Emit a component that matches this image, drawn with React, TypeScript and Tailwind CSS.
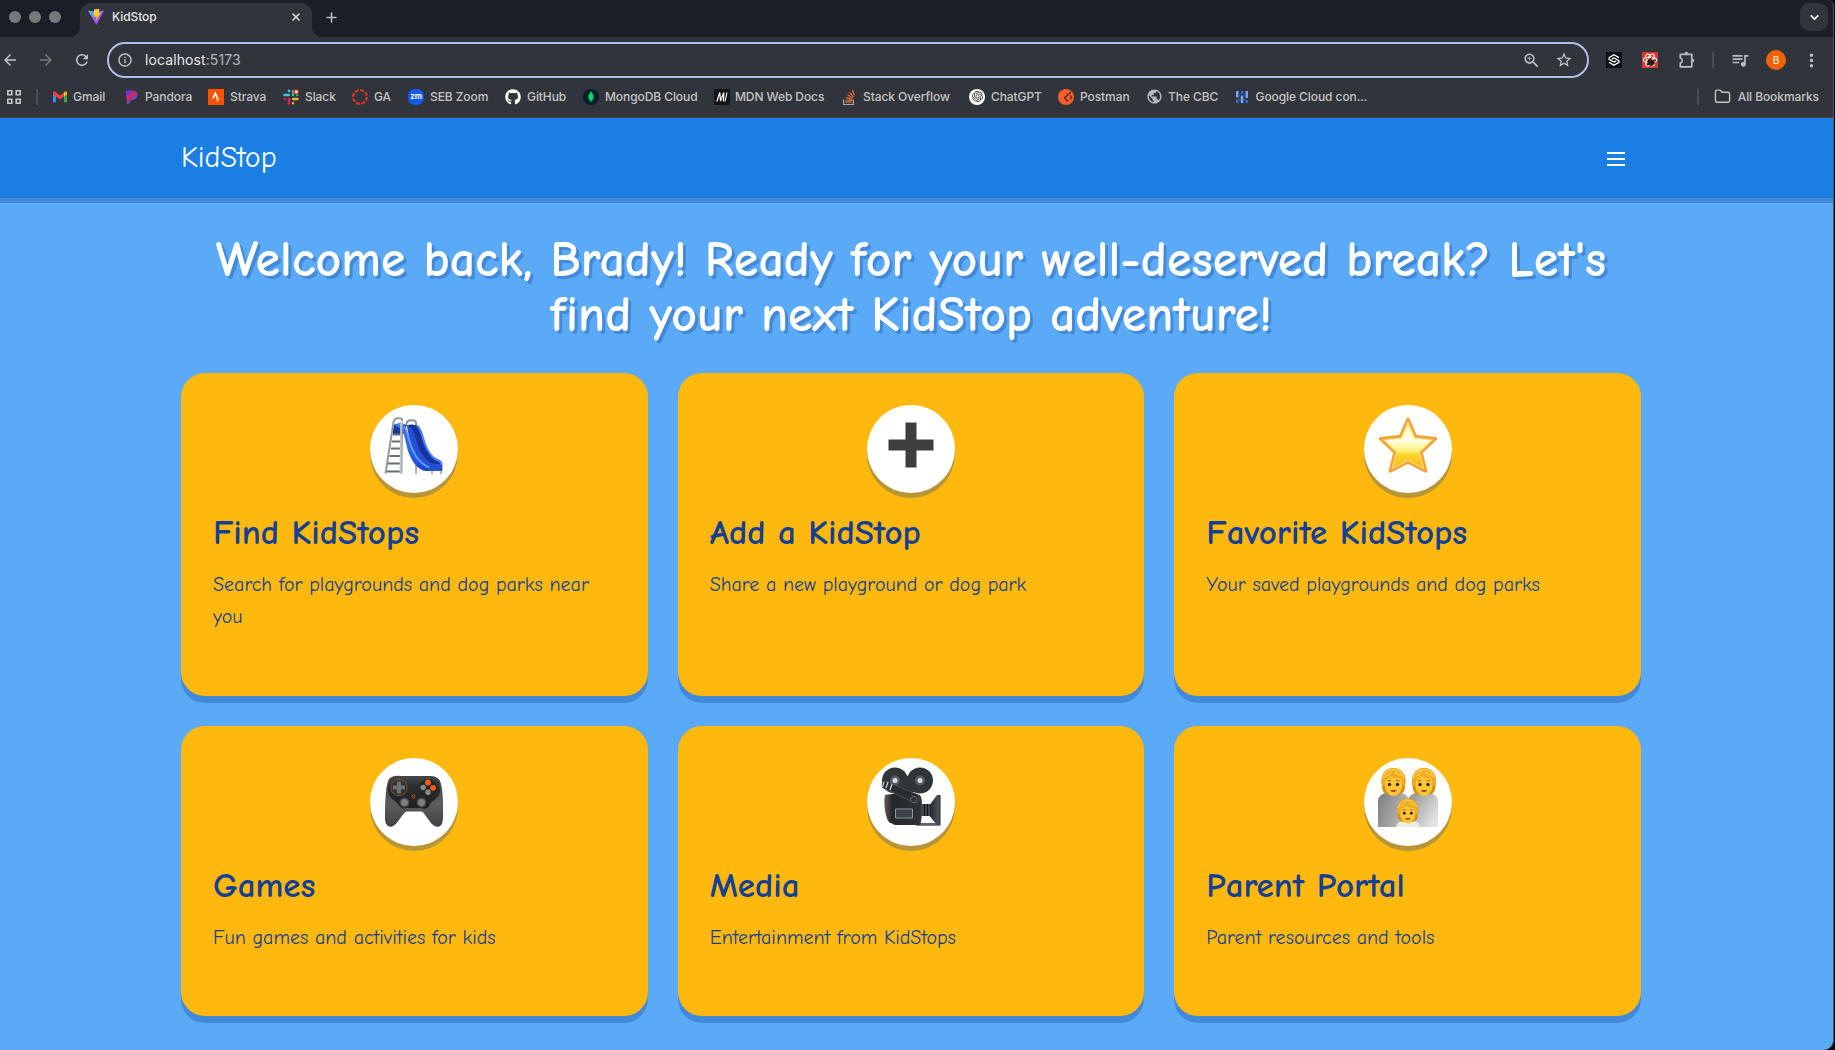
import type { ReactNode } from 'react';
import { ChevronDown, Folder, Plus, X } from 'lucide-react';
import { FaGithub } from 'react-icons/fa';
import {
  MdArrowBack,
  MdArrowForward,
  MdInfoOutline,
  MdMoreVert,
  MdPublic,
  MdQueueMusic,
  MdRefresh,
  MdStarBorder,
  MdZoomIn,
} from 'react-icons/md';
import { SiOpenai } from 'react-icons/si';

/* ---------- Browser chrome icons ---------- */

const ViteLogo = () => (
  <svg width="16" height="16" viewBox="0 0 16 16">
    <defs>
      <linearGradient id="vite" x1="0" y1="0" x2="0.6" y2="1">
        <stop offset="0" stopColor="#41d1ff" />
        <stop offset="0.5" stopColor="#8a6bff" />
        <stop offset="1" stopColor="#bd34fe" />
      </linearGradient>
      <linearGradient id="bolt" x1="0" y1="0" x2="0" y2="1">
        <stop offset="0" stopColor="#ffdd35" />
        <stop offset="1" stopColor="#ffa800" />
      </linearGradient>
    </defs>
    <path d="M0 1.5 8 3l8-1.500L8.300 16z" fill="url(#vite)" />
    <path d="M6 .6 11.500 0l-1 3.800 2.200-.3-4.700 9 .6-5-3 .5z" fill="url(#bolt)" />
  </svg>
);

const AppsIcon = () => (
  <svg width="14" height="14" viewBox="0 0 14 14" fill="none" stroke="#c6c7ca" strokeWidth="1.600">
    <path d="M.8.8h4v4h-4zM9.200.8h4v4h-4zM.8 9.200h4v4h-4zM9.200 9.200h4v4h-4z" />
  </svg>
);

const PuzzleIcon = () => (
  <svg width="18" height="18" viewBox="0 0 18 18" fill="none" stroke="#b9bcc6" strokeWidth="1.700" strokeLinejoin="round">
    <path d="M2.300 3.300h11.500v12.500H2.300v-3.600c2.600-.6 2.600-4.600 0-5.200z" />
    <path d="M6.300 2.800a2 2 0 0 1 4 0zM14.300 7.500a2 2 0 0 1 0 4z" fill="#b9bcc6" stroke="none" />
  </svg>
);

const Gmail = () => (
  <svg width="16" height="16" viewBox="0 0 16 16">
    <path d="M1 4v9.300h3V6z" fill="#4285f4" />
    <path d="M12 6v7.300h3V4z" fill="#34a853" />
    <path d="M1 3.500C1 2.400 2.300 2 3.200 2.700L8 6.400l4.800-3.700L12 7.600 8 10.500 1 5.300z" fill="#ea4335" />
    <path d="M12 3.300c1.500-1.300 3-.6 3 .5v1.500l-3 2.300z" fill="#fbbc04" />
  </svg>
);

const Pandora = () => (
  <svg width="16" height="16" viewBox="0 0 16 16">
    <defs>
      <linearGradient id="pan" x1="0" y1="0" x2="0.8" y2="1">
        <stop offset="0" stopColor="#3a4fe0" />
        <stop offset="0.28" stopColor="#7a35c8" />
        <stop offset="0.45" stopColor="#e0284f" />
        <stop offset="0.6" stopColor="#b02f8a" />
        <stop offset="0.75" stopColor="#2a6df0" />
      </linearGradient>
    </defs>
    <path d="M1.500 2.500C4 .7 6 1.500 8 1.500c4 0 5.500 1.700 5.500 4.300 0 3-2.300 4.700-5 5.200L6.500 11.500c0 2-1 3.500-3.500 3.700-.8-2 .5-4-.5-6C1.500 7 2.500 5 1.500 2.500z" fill="url(#pan)" />
  </svg>
);

const Strava = () => (
  <svg width="16" height="16" viewBox="0 0 16 16">
    <path d="M0 0h16v16H0z" fill="#fc5200" />
    <path d="M4 9.300 7.300 2.500l3.300 6.800H8.700L7.300 6.500 5.900 9.300z" fill="#fff" />
    <path d="m7.500 9.300 2.100 4.200 2.200-4.200h-1.300l-.9 1.700-.8-1.700z" fill="#ffc9ad" />
  </svg>
);

const Slack = () => (
  <svg width="16" height="16" viewBox="0 0 16 16" strokeWidth="2.600" strokeLinecap="round">
    <path d="M1.500 6h4.200M6 1.800v.1" stroke="#36c5f0" />
    <path d="M10 2v4M14.200 6h.1" stroke="#2eb67d" />
    <path d="M10.200 10h4.200M10 14.200v.1" stroke="#ecb22e" />
    <path d="M6 10v4.200M1.700 10h.1" stroke="#e01e5a" />
    <circle cx="13.300" cy="2.700" r="2.700" fill="#e8201f" />
    <circle cx="13.300" cy="2.700" r="1.500" fill="#fff" />
  </svg>
);

const GaRing = () => (
  <svg width="16" height="16" viewBox="0 0 16 16" fill="none">
    <circle cx="8" cy="8" r="6.900" stroke="#e3342a" strokeWidth="2.200" strokeDasharray="3.900 1.520" />
  </svg>
);

const Zoom = () => (
  <span className="flex h-4 w-4 items-center justify-center rounded-[7px] bg-[#1359f2] font-['Inter'] text-[8px] font-bold leading-none tracking-[-0.3px] text-white">
    <span className="-mt-px">zm</span>
  </span>
);

const Mongo = () => (
  <svg width="16" height="16" viewBox="0 0 16 16">
    <circle cx="8" cy="8" r="8" fill="#001e2b" />
    <path d="M8 2.500c3.300 3.600 3.500 7 .3 9.700L8.200 13.500h-.4l-.1-1.300C4.500 9.500 4.700 6.100 8 2.500z" fill="#00d95f" />
  </svg>
);

const Mdn = () => (
  <svg width="16" height="16" viewBox="0 0 16 16" fill="none" stroke="#fff">
    <path d="M0 0h16v16H0z" fill="#15141a" stroke="none" />
    <path d="m2.800 12.500 3-9 .7 8.500 3.300-8.500-.3 9" strokeWidth="1.200" />
    <path d="m11 12.500 2-9" strokeWidth="1.100" />
  </svg>
);

const StackOverflow = () => (
  <svg width="16" height="16" viewBox="0 0 16 16" fill="none">
    <path d="M1.600 10.500v5h9.800v-5" stroke="#a9abae" strokeWidth="1.100" />
    <path d="M3.300 13.200h6.400M3.400 11l6.400.6M4 8.500l6.100 1.800M5.500 5.800l5.200 3.400M7.600 3.300l4 4.900M10.300 1.300l2.200 5" stroke="#e8702c" strokeWidth="1.200" />
  </svg>
);

const ChatGpt = () => (
  <span className="flex h-4 w-4 items-center justify-center rounded-full bg-white">
    <SiOpenai size={11} color="#2c2c2e" />
  </span>
);

const Postman = () => (
  <svg width="16" height="16" viewBox="0 0 16 16" fill="none">
    <circle cx="8" cy="8" r="8" fill="#ff5d2b" />
    <path d="M13 3 6.500 8.800l3.700 3.700M12.300 6.500c1.600 1 1 3-.2 3.600" stroke="#3a2a2b" strokeWidth="1.200" />
  </svg>
);

const GoogleCloud = () => (
  <svg width="16" height="16" viewBox="0 0 16 16">
    <path d="M2 2h2.500v6.500H2zM11.500 2H14v7h-2.500zM6.800 6.500h2.500V14H6.800z" fill="#7ba4f6" />
    <path d="M2 10.500h2.500V14H2zM11.500 11H14v3h-2.500zM6.800 2h2.500v3H6.800z" fill="#3367e0" />
    <path d="M4.500 4H6v3H4.500zM9.500 4h1.700v3H9.500zM4.800 9.500H6V13H4.800zM9.800 9.500H11V12H9.800z" fill="#2d4fa8" />
  </svg>
);

const KnotExtension = () => (
  <svg width="16" height="16" viewBox="0 0 16 16" fill="none" stroke="#fff" strokeWidth="1.300">
    <path d="M0 0h16v16H0z" fill="#0b1118" stroke="none" />
    <path d="M12.900 5.600 8 2.700 3.100 5.600v1.800L8 10l2.300-1.200" />
    <path d="M3.100 10.400 8 13.300l4.900-2.900V8.600L8 6 5.700 7.200" />
  </svg>
);

const ReactExtension = () => (
  <svg width="16" height="16" viewBox="0 0 16 16" fill="none">
    <path d="M0 0h16v16H0z" fill="#d8392f" />
    <g stroke="#fff" strokeWidth="1.100">
      <ellipse cx="8" cy="8" rx="6.600" ry="2.700" />
      <ellipse cx="8" cy="8" rx="6.600" ry="2.700" transform="rotate(60 8 8)" />
      <ellipse cx="8" cy="8" rx="6.600" ry="2.700" transform="rotate(120 8 8)" />
    </g>
    <path d="m5 9 3-2 4 1 1 3-3 3-4-1z" fill="#241b1b" />
    <path d="m6 7-1.500-1M9 6.500 10 5m3 4 1-1M6 12l-1 1.500" stroke="#241b1b" />
  </svg>
);

/* ---------- Card pictograms ---------- */

const Slide = () => (
  <svg viewBox="0 0 88 88" className="h-full w-full" fill="none">
    <defs>
      <linearGradient id="chute" x1="0" y1="0" x2="1" y2="1">
        <stop offset="0" stopColor="#3b74e8" />
        <stop offset="0.5" stopColor="#2c64e4" />
        <stop offset="1" stopColor="#1b3fc4" />
      </linearGradient>
    </defs>
    <path d="M46 60v9M62 64v5M71 64v5" stroke="#8a8d93" strokeWidth="1.300" />
    <path d="M36.500 21v-2.500c.5-3 2-3.300 4.500-3.300 3.500 0 5 .2 5 2.300V22" stroke="#8c9096" strokeWidth="1.900" />
    <path d="m23 20 8.500-2.500 5 3-2 8-11.800 1z" fill="#153a9c" />
    <path d="M37 20.500c4-1.800 9-1 11.500 1.500 3 3 3.500 8.500 6 15 2.500 7 6 13.500 11.500 16.500l4 1.800c2 1.200 2.300 3 2.300 5.200v5.300H60c-5 0-9.500-4.800-12.500-10.500z" fill="#16329f" />
    <path d="M37 20.500c5 1.500 7.500 7.500 9.500 15.500 2.500 9 7 18 15.500 22.500l9.500.8v6.200H60C50 65 45 50 40 39z" fill="#2450d2" />
    <path d="M47 21c4 2 4.800 9 7.500 17 2.500 7 6.500 13.500 11.500 16.500 4 1.500 5.500 2.500 5.500 5.500" stroke="#4a83f2" strokeWidth="2.200" />
    <path d="M24.500 20c5-2.500 8.500-1 10.500 4 3 7 4.500 17.500 9 25 4 8 7.500 12 14.500 14.500v2.500H56c-8-1-12.500-7.500-16-15-4-8.500-4.500-20.500-8-26z" fill="url(#chute)" />
    <path d="M28 19c4-1 6 1.500 7.800 6 3 7 4.700 17 9.200 24.500C48 55 52 59 59 62.500" stroke="#5b95fa" strokeWidth="2" />
    <path d="M16.500 66.500h14M18 58.500h13M19.500 51h11.500M21 43.500h10M22 36.500h9M23 29.500h8" stroke="#696c70" strokeWidth="2" />
    <path d="m15.500 68.500 8-51c.3-3 2-4 4.500-4.200 3-.3 4.500.5 4 2.700" stroke="#94989d" strokeWidth="2" />
    <path d="M31.500 16.500 30.700 68.500" stroke="#c2c5c9" strokeWidth="2.400" />
    <path d="M32.500 20 31.900 68.500" stroke="#76797e" strokeWidth=".7" />
  </svg>
);

const PlusSign = () => (
  <svg viewBox="0 0 88 88" className="h-full w-full">
    <path d="M38.500 17.500h11v17h17v11h-17V62.500h-11v-17h-17v-11h17z" fill="#3e3e3e" />
  </svg>
);

const Star = () => (
  <svg viewBox="0 0 88 88" className="h-full w-full">
    <defs>
      <linearGradient id="star" x1="0" y1="0" x2="0" y2="1">
        <stop offset="0" stopColor="#fff7b0" />
        <stop offset="0.42" stopColor="#ffffe0" />
        <stop offset="0.62" stopColor="#fff27a" />
        <stop offset="0.68" stopColor="#ffd62e" />
        <stop offset="1" stopColor="#fbb414" />
      </linearGradient>
    </defs>
    <path
      d="M44 14.200 51.500 31.500 71.500 33.700 57 47.300 61.700 66 44 57 26.300 66 31 47.300 16.500 33.700 36.500 31.500z"
      fill="url(#star)"
      stroke="#f1a33c"
      strokeWidth="3.400"
      strokeLinejoin="round"
    />
    <path d="M44 17 50.500 33 68 35 55.500 47 59.700 63.500 44 55.500 28.300 63.500 32.500 47 20 35 37.500 33z" fill="none" stroke="#ffe98f" strokeWidth="1.200" opacity=".7" />
  </svg>
);

const Gamepad = () => (
  <svg viewBox="0 0 88 88" className="h-full w-full">
    <defs>
      <linearGradient id="grip" x1="0" y1="0" x2="0" y2="1">
        <stop offset="0" stopColor="#3f4142" />
        <stop offset="0.55" stopColor="#5b5d5e" />
        <stop offset="1" stopColor="#3e4041" />
      </linearGradient>
      <linearGradient id="face" x1="0" y1="0" x2="0" y2="1">
        <stop offset="0" stopColor="#46494a" />
        <stop offset="0.3" stopColor="#2a2c2e" />
        <stop offset="1" stopColor="#1d1f21" />
      </linearGradient>
    </defs>
    <path d="M19 21c3-3 7-3.500 11-3h28c5-.5 9 .5 11.500 4 3 5 4 20 3.500 38-.2 7-3 9.500-7 8.500-6-1.500-11-14-14.500-15h-15c-3.500 1-9 13.500-14.500 15-4.500 1-7-2.500-7-8.500 0-18 .8-34 4-39z" fill="url(#grip)" />
    <path d="M20 23c3-4 7-4.500 11-4h26c5-.5 9 .5 11 4 2 5 3 9.500 1 14-3 5-8 6-9.500 10-2 4.500-6 4-9 3h-13c-4 1-7 0-9-3-2-4-7-5-9.500-10-2-5-1-10 1-14z" fill="url(#face)" />
    <circle cx="29" cy="29.500" r="8.200" fill="#303334" stroke="#8f4a2d" strokeWidth="1" />
    <path d="M27 23.500h4v4h4v4h-4v4h-4v-4h-4v-4h4z" fill="#6d7172" />
    <circle cx="58" cy="29.500" r="8.500" fill="#242627" />
    <circle cx="58" cy="24.500" r="2.900" fill="#ff5a14" />
    <circle cx="63" cy="29.800" r="2.900" fill="#ff5a14" />
    <circle cx="53.200" cy="29.500" r="2.700" fill="#898c8d" />
    <circle cx="58" cy="34.300" r="2.700" fill="#898c8d" />
    <circle cx="43.500" cy="38.500" r="1.600" fill="#44260f" stroke="#d65a20" strokeWidth=".8" />
    <circle cx="34.500" cy="44.500" r="4.200" fill="#7b8082" stroke="#45494b" strokeWidth="1.500" />
    <circle cx="51.500" cy="44.500" r="4.200" fill="#7b8082" stroke="#45494b" strokeWidth="1.500" />
  </svg>
);

const MovieCamera = () => (
  <svg viewBox="0 0 88 88" className="h-full w-full">
    <defs>
      <linearGradient id="cam" x1="0" y1="0" x2="1" y2="0">
        <stop offset="0" stopColor="#6b5a52" />
        <stop offset="0.2" stopColor="#25282b" />
        <stop offset="1" stopColor="#2f3438" />
      </linearGradient>
      <linearGradient id="hood" x1="0" y1="0" x2="1" y2="0">
        <stop offset="0" stopColor="#24282c" />
        <stop offset="0.8" stopColor="#4b5359" />
        <stop offset="1" stopColor="#20242a" />
      </linearGradient>
    </defs>
    <path d="M36 18h14v16H34z" fill="#2d3236" />
    <circle cx="28" cy="22.500" r="13" fill="#303539" />
    <circle cx="53" cy="22.500" r="13" fill="#303539" />
    <circle cx="28" cy="22.500" r="5" fill="#555e64" />
    <circle cx="28" cy="22.500" r="2.500" fill="#d5dde3" />
    <circle cx="53" cy="22.500" r="5" fill="#555e64" />
    <circle cx="53" cy="22.500" r="2.500" fill="#d5dde3" />
    <path d="M49 65h24v2.800H49z" fill="#5a6269" />
    <path d="M18 37c5-1.500 30-2.500 35 0 2 3 2.200 8 2 14s-.5 13-2 16H29c-3 0-3.500-2-6-2-4-3-7-18-5-28z" fill="url(#cam)" />
    <path d="M54 46h12v12H54z" fill="#42494f" />
    <path d="M57.500 46v12M60.500 46v12" stroke="#151719" strokeWidth="1.200" />
    <path d="M63 46.500 70 37h3.500v30H70l-7-8.500z" fill="url(#hood)" />
    <path d="M28.500 51h17v9h-17z" fill="#3b4146" stroke="#8c969c" strokeWidth="1" />
    <path d="m15 25 3.500-2 31 13c5 2.500 3 10-2.500 8.500L15 29.500z" fill="#2a2e32" stroke="#596066" strokeWidth=".7" />
    <path d="m17 24-1.500 5M21 24l-2 6M25 26l-2 6" stroke="#c8cdd1" strokeWidth="1.300" />
    <circle cx="46.500" cy="41.500" r="3" fill="#2a2f33" stroke="#69727a" strokeWidth="1" />
  </svg>
);

const Head = () => (
  <g>
    <path d="M-11.500 4C-14-8-8-14.500 0-14.500S14-8 11.500 4C11.500 8 9.500 11 6 12H-6c-3.500-1-5.500-4-5.500-8z" fill="#d98e12" />
    <path d="M-8.500-3C-8.500-9-4-10 0-10s8.500 1 8.500 7v6C8.500 9 4 13.500 0 13.500S-8.500 9-8.500 3z" fill="#fcc736" />
    <path d="M-11.500 3C-13.500-8-8-14.500 0-14.500S13.500-8 11.500 3L9 3.500C9 0 8.500-3 7-4 2-3.500-1-5-2.500-6.500c-1.500 2-4 3-5.500 3.500L-9 3.500z" fill="#f0a920" />
    <path d="M-11-4C-9.500-10-5.500-13 0-13c5.500 0 9 3.500 10 8M-8.500-6c3-1 5.500-3 6.500-5.500M1-10.500c2 2 4.500 3 7 3" fill="none" stroke="#ffd658" strokeWidth="1.100" />
    <circle cx="-4" cy="2" r="1.700" fill="#3f2716" />
    <circle cx="4" cy="2" r="1.700" fill="#3f2716" />
    <path d="M-6.200-1.400c1-.8 2.700-.8 3.700 0M2.500-1.400c1-.8 2.700-.8 3.700 0" fill="none" stroke="#96590c" strokeWidth="1" />
    <path d="M-2.800 8c1.500 1.500 4 1.500 5.600 0z" fill="#b5451b" stroke="#b5451b" strokeWidth="1" />
  </g>
);

const Family = () => (
  <svg viewBox="0 0 88 88" className="h-full w-full">
    <defs>
      <linearGradient id="coatL" x1="0" y1="0" x2="1" y2="0.4">
        <stop offset="0" stopColor="#7d7d7d" />
        <stop offset="1" stopColor="#b9b9b9" />
      </linearGradient>
      <linearGradient id="coatR" x1="0" y1="0" x2="1" y2="0.7">
        <stop offset="0" stopColor="#8e8e8e" />
        <stop offset="1" stopColor="#e4e4e4" />
      </linearGradient>
    </defs>
    <path d="M14 69V42c1-4 4-6.500 8-7h14c5 .5 8 3 8.500 7v27z" fill="url(#coatL)" />
    <path d="M44 69V42c1-4 4-6.500 8-7h13c5 .5 8 3 9 7v27z" fill="url(#coatR)" />
    <g transform="translate(29.500 24.500)"><Head /></g>
    <g transform="translate(60 24.500)"><Head /></g>
    <path d="M32.500 69c0-4 2.500-5.500 6-6h11c4 .5 6 2 6 6z" fill="#ececec" />
    <g transform="translate(43.800 53.500) scale(.88)"><Head /></g>
  </svg>
);

/* ---------- Data ---------- */

const bookmarks: { label: string; icon: ReactNode; width: string; gap?: string }[] = [
  { label: 'Gmail', icon: <Gmail />, width: 'w-[72px]', gap: 'gap-[5px]' },
  { label: 'Pandora', icon: <Pandora />, width: 'w-[84px]', gap: 'gap-[5px]' },
  { label: 'Strava', icon: <Strava />, width: 'w-[75px]' },
  { label: 'Slack', icon: <Slack />, width: 'w-[69px]' },
  { label: 'GA', icon: <GaRing />, width: 'w-[56px]' },
  { label: 'SEB Zoom', icon: <Zoom />, width: 'w-[97px]' },
  { label: 'GitHub', icon: <FaGithub size={16} color="#fff" />, width: 'w-[78px]' },
  { label: 'MongoDB Cloud', icon: <Mongo />, width: 'w-[131px]', gap: 'gap-[6px]' },
  { label: 'MDN Web Docs', icon: <Mdn />, width: 'w-[128px]', gap: 'gap-[5px]' },
  { label: 'Stack Overflow', icon: <StackOverflow />, width: 'w-[127px]', gap: 'gap-[5px]' },
  { label: 'ChatGPT', icon: <ChatGpt />, width: 'w-[89px]' },
  { label: 'Postman', icon: <Postman />, width: 'w-[88px]' },
  { label: 'The CBC', icon: <MdPublic size={17} color="#b4b8bf" />, width: 'w-[88px]', gap: 'gap-[5px]' },
  { label: 'Google Cloud con...', icon: <GoogleCloud />, width: 'w-[140px]', gap: 'gap-[5.500px]' },
];

const cards: { title: string; text: string; icon: ReactNode }[] = [
  { title: 'Find KidStops', text: 'Search for playgrounds and dog parks near you', icon: <Slide /> },
  { title: 'Add a KidStop', text: 'Share a new playground or dog park', icon: <PlusSign /> },
  { title: 'Favorite KidStops', text: 'Your saved playgrounds and dog parks', icon: <Star /> },
  { title: 'Games', text: 'Fun games and activities for kids', icon: <Gamepad /> },
  { title: 'Media', text: 'Entertainment from KidStops', icon: <MovieCamera /> },
  { title: 'Parent Portal', text: 'Parent resources and tools', icon: <Family /> },
];

/* ---------- Browser chrome ---------- */

function TabStrip() {
  return (
    <div className="flex h-[37px] items-end bg-[#1b1e26]">
      <div className="flex h-[37px] w-[70px] items-center gap-2 pb-[3px] pl-[9px]">
        <span className="h-3 w-3 rounded-full bg-[#77787b]" />
        <span className="h-3 w-3 rounded-full bg-[#77787b]" />
        <span className="h-3 w-3 rounded-full bg-[#77787b]" />
      </div>
      <div className="h-[10px] w-[10px] bg-[#32343b]">
        <div className="h-full w-full rounded-br-[10px] bg-[#1b1e26]" />
      </div>
      <div className="flex h-[34px] w-[232px] items-center rounded-t-[11px] bg-[#32343b] pb-[6px] pl-2 pr-[10px]">
        <ViteLogo />
        <span className="ml-2 flex-1 text-[12px] font-medium tracking-[-0.1px] text-[#e4e5e8]">KidStop</span>
        <X size={12} strokeWidth={3.200} color="#dcdde0" />
      </div>
      <div className="h-[10px] w-[10px] bg-[#32343b]">
        <div className="h-full w-full rounded-bl-[10px] bg-[#1b1e26]" />
      </div>
      <div className="flex h-[37px] flex-1 items-center justify-between pb-[3px] pl-[2px] pr-[5px]">
        <Plus size={15} strokeWidth={2.600} color="#b8babf" />
        <span className="flex h-7 w-7 items-center justify-center rounded-[9px] bg-[#32343b]">
          <ChevronDown size={13} strokeWidth={3.500} color="#e8e9ec" />
        </span>
      </div>
    </div>
  );
}

function Toolbar() {
  return (
    <div className="flex h-[46px] items-center">
      <div className="flex w-5 justify-center">
        <MdArrowBack size={18} color="#c0c3cb" className="shrink-0" />
      </div>
      <div className="flex w-[52px] justify-center">
        <MdArrowForward size={18} color="#75777c" />
      </div>
      <div className="flex w-5 justify-center">
        <MdRefresh size={18} color="#c0c3cb" />
      </div>
      <div className="ml-[15px] flex h-9 w-[1482px] items-center rounded-full border-2 border-[#b0bde4] pl-2">
        <MdInfoOutline size={16} color="#c9cacd" />
        <span className="ml-3 flex-1 text-[14px] leading-none tracking-[0.1px] text-[#e6e7ea]">
          localhost<span className="text-[#b3b4b8]">:5173</span>
        </span>
        <MdZoomIn size={19} color="#c0c1c4" />
        <MdStarBorder size={18} color="#c6c7ca" className="ml-[14px] mr-[14px]" />
      </div>
      <div className="ml-[17px]"><KnotExtension /></div>
      <div className="ml-5"><ReactExtension /></div>
      <div className="ml-[20px]"><PuzzleIcon /></div>
      <div className="ml-4 h-4 w-[2px] bg-[#4b4d58]" />
      <MdQueueMusic size={20} color="#b9bcc6" className="ml-4" />
      <span className="ml-4 flex h-5 w-5 items-center justify-center rounded-full bg-[#ed6205] text-[10px] font-medium text-[#f6e3d6]">
        B
      </span>
      <MdMoreVert size={21} color="#b9bcc6" className="ml-[15px]" />
    </div>
  );
}

function BookmarksBar() {
  return (
    <div className="flex h-[35px] items-center border-b border-[#41434b] pb-[7px] text-[12px] font-medium tracking-[-0.08px] text-[#c4c4c6]">
      <div className="ml-[7px]"><AppsIcon /></div>
      <div className="ml-[15px] mr-[14px] h-4 w-[2px] bg-[#4b4d55]" />
      {bookmarks.map(({ label, icon, width, gap }) => (
        <div key={label} className={`flex shrink-0 items-center whitespace-nowrap ${width} ${gap ?? 'gap-[6px]'}`}>
          {icon}
          <span>{label}</span>
        </div>
      ))}
      <div className="ml-auto h-4 w-[2px] bg-[#4b4d55]" />
      <Folder size={17} color="#c4c4c6" strokeWidth={2} className="ml-[15px]" />
      <span className="ml-[7px] mr-[14px]">All Bookmarks</span>
    </div>
  );
}

/* ---------- Page ---------- */

export default function App() {
  return (
    <div className="h-[1050px] w-[1835px] overflow-hidden bg-[#0a0b0e] font-['Inter',sans-serif]">
      <div className="flex h-full w-[1834px] flex-col overflow-hidden rounded-br-[10px] rounded-tr-[6px] border-r border-[#4a5563] bg-[#5aaaf7]">
        <div className="bg-[#32343b]">
          <TabStrip />
          <Toolbar />
          <BookmarksBar />
        </div>

        <div className="font-['Comic_Neue','Lato',sans-serif]">
          <header className="h-20 bg-[#1b7ee2] shadow-[0_5px_0_#4389d9]">
            <div className="ml-[181px] flex h-full w-[1460px] items-center justify-between pr-4">
              <span className="-mt-px text-[30px] font-normal leading-none text-white">KidStop</span>
              <div className="mt-[2px] flex w-[18px] flex-col gap-[3.500px]">
                <span className="h-[2.500px] bg-white" />
                <span className="h-[2.500px] bg-white" />
                <span className="h-[2.500px] bg-white" />
              </div>
            </div>
          </header>

          <main className="ml-[181px] w-[1460px] pt-[35px]">
            <h1 className="whitespace-nowrap text-center text-[50px] font-bold leading-[55px] text-white [text-shadow:3px_3px_0_#4389d9]">
              <span className="block">Welcome back, Brady! Ready for your well-deserved break? Let's</span>
              <span className="block">find your next KidStop adventure!</span>
            </h1>

            <div className="mt-[30px] grid grid-cols-3 grid-rows-[322.500px_290px] gap-[30px]">
              {cards.map((card) => (
                <section key={card.title} className="rounded-3xl bg-[#ffb80d] p-8 shadow-[0_7px_0_#4389d9]">
                  <div className="mx-auto h-[88px] w-[88px] rounded-full bg-white shadow-[0_5px_0_#b89536]">
                    {card.icon}
                  </div>
                  <h2 className="mt-5 text-[35px] font-bold leading-10 text-[#133f94]">{card.title}</h2>
                  <p className="mt-4 text-[20px] leading-8 text-[#133f94]">{card.text}</p>
                </section>
              ))}
            </div>
          </main>
        </div>
      </div>
    </div>
  );
}
